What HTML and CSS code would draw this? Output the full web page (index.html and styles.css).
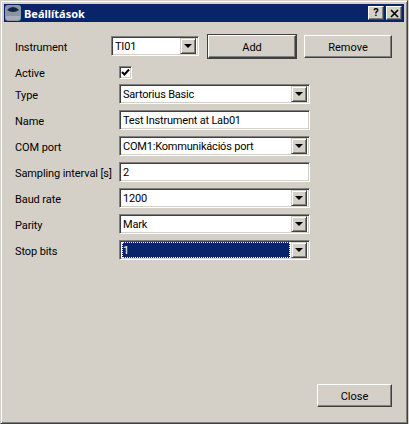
FILE: index.html
```html
<!DOCTYPE html>
<html lang="en">
<head>
    <meta charset="UTF-8">
    <title>Beállítások</title>
    <link rel="stylesheet" href="styles.css">
</head>
<body>

    <div class="window">
        <div class="titlebar">
            <svg class="app-icon" xmlns="http://www.w3.org/2000/svg" viewBox="0 0 16 16">
                <rect x="0" y="0" width="16" height="16" rx="3" fill="#8d93a3"></rect>
                <path d="M2 5 Q8 -1 14 5 Q8 9 2 5 Z" fill="#0f2440"></path>
                <path d="M1 11 H15 V13 Q15 15 13 15 H3 Q1 15 1 13 Z" fill="#a9adb8"></path>
            </svg>
            <span class="title">Beállítások</span>
            <div class="caption-btn">
                <span class="help">?</span>
            </div>
            <div class="caption-btn close-x">
                <svg xmlns="http://www.w3.org/2000/svg" viewBox="0 0 9 9" width="9" height="9">
                    <path d="M1 1 L8 8 M8 1 L1 8" stroke="#000" stroke-width="1.6" fill="none"></path>
                </svg>
            </div>
        </div>

        <div class="content">
            <div class="top-row">
                <label class="top-label">Instrument</label>
                <div class="combo combo-small">
                    <span class="combo-text">TI01</span>
                    <span class="combo-btn"><i class="arrow"></i></span>
                </div>
                <button class="btn btn-default">Add</button>
                <button class="btn btn-remove">Remove</button>
            </div>

            <div class="row row-check">
                <label>Active</label>
                <span class="checkbox">
                    <svg xmlns="http://www.w3.org/2000/svg" viewBox="0 0 9 9" width="9" height="9">
                        <path d="M1 4 L3.5 6.5 L8 1.5" stroke="#000" stroke-width="2" fill="none"></path>
                    </svg>
                </span>
            </div>

            <div class="row">
                <label>Type</label>
                <div class="combo">
                    <span class="combo-text">Sartorius Basic</span>
                    <span class="combo-btn"><i class="arrow"></i></span>
                </div>
            </div>
            <div class="row">
                <label>Name</label>
                <input class="field" type="text" value="Test Instrument at Lab01">
            </div>
            <div class="row">
                <label>COM port</label>
                <div class="combo">
                    <span class="combo-text">COM1:Kommunikációs port</span>
                    <span class="combo-btn"><i class="arrow"></i></span>
                </div>
            </div>
            <div class="row">
                <label>Sampling interval [s]</label>
                <input class="field" type="text" value="2">
            </div>
            <div class="row">
                <label>Baud rate</label>
                <div class="combo">
                    <span class="combo-text">1200</span>
                    <span class="combo-btn"><i class="arrow"></i></span>
                </div>
            </div>
            <div class="row">
                <label>Parity</label>
                <div class="combo">
                    <span class="combo-text">Mark</span>
                    <span class="combo-btn"><i class="arrow"></i></span>
                </div>
            </div>
            <div class="row">
                <label>Stop bits</label>
                <div class="combo combo-focus">
                    <span class="combo-text">1</span>
                    <span class="combo-btn"><i class="arrow"></i></span>
                </div>
            </div>

            <div class="footer">
                <button class="btn btn-close">Close</button>
            </div>
        </div>
    </div>

</body>
</html>
```

FILE: styles.css
```css
* {
    margin: 0;
    padding: 0;
    box-sizing: border-box;
    font-family: Roboto, "Liberation Sans", sans-serif;
}

body {
    background-color: #d4d0c8;
    width: 409px;
    height: 424px;
    overflow: hidden;
}

.window {
    width: 408px;
    height: 424px;
    padding: 4px;
    background: #d4d0c8;
    border: 1px solid;
    border-color: #d4d0c8 #404040 #404040 #d4d0c8;
    box-shadow: inset 1px 1px 0 #fff, inset -1px -1px 0 #808080;
    display: flex;
    flex-direction: column;
    font-size: 11px;
    color: #000;
}

.titlebar {
    height: 18px;
    margin: -1px -1px 0;
    background: #0a246a;
    display: flex;
    align-items: center;
    padding-right: 2px;
    gap: 2px;
}

.app-icon {
    width: 16px;
    height: 16px;
    margin-left: 1px;
}

.title {
    flex: 1;
    margin-left: 1px;
    color: #fff;
    font-family: "Noto Sans", sans-serif;
    font-size: 11px;
    font-weight: bold;
}

.caption-btn {
    width: 16px;
    height: 14px;
    background: #d4d0c8;
    border: 1px solid;
    border-color: #fff #404040 #404040 #fff;
    box-shadow: inset -1px -1px 0 #808080;
    display: flex;
    align-items: center;
    justify-content: center;
}

.help {
    font-size: 11px;
    font-weight: bold;
    line-height: 12px;
}

.content {
    flex: 1;
    display: flex;
    flex-direction: column;
    padding: 11px 11px 12px 10px;
}

.top-row {
    display: flex;
    align-items: center;
    height: 26px;
    margin-bottom: 6px;
}

.top-label {
    width: 96px;
    padding-top: 2px;
    letter-spacing: -0.1px;
}

.row {
    display: flex;
    align-items: center;
    height: 20px;
    margin-bottom: 6px;
}

.row label {
    width: 104px;
    flex-shrink: 0;
    white-space: nowrap;
    padding-top: 2px;
    letter-spacing: -0.1px;
}

.row-check {
    height: 14px;
    margin-bottom: 5px;
}

.combo, .field {
    width: 191px;
    height: 20px;
    background: #fff;
    border: 1px solid;
    border-color: #808080 #fff #fff #808080;
    box-shadow: inset 1px 1px 0 #404040, inset -1px -1px 0 #d4d0c8;
    font-size: 11px;
    letter-spacing: -0.2px;
    color: #000;
}

.combo {
    display: flex;
    align-items: center;
    padding: 2px;
}

.combo-text {
    flex: 1;
    padding-left: 1px;
    padding-top: 1px;
    height: 16px;
    line-height: 16px;
    white-space: nowrap;
    overflow: hidden;
}

.combo-btn {
    width: 16px;
    height: 16px;
    flex-shrink: 0;
    background: #d4d0c8;
    border: 1px solid;
    border-color: #d4d0c8 #404040 #404040 #d4d0c8;
    box-shadow: inset 1px 1px 0 #fff, inset -1px -1px 0 #808080;
    display: flex;
    align-items: center;
    justify-content: center;
}

.arrow {
    width: 0;
    height: 0;
    border-left: 4px solid transparent;
    border-right: 4px solid transparent;
    border-top: 4px solid #000;
}

.combo-small {
    width: 88px;
}

.field {
    padding: 1px 3px 0;
    outline: none;
}

.combo-focus .combo-text {
    background: #0a246a;
    color: #fff;
    margin-right: 1px;
    outline: 1px dotted #fff;
    outline-offset: -1px;
}

.checkbox {
    width: 13px;
    height: 13px;
    background: #fff;
    border: 1px solid;
    border-color: #808080 #fff #fff #808080;
    box-shadow: inset 1px 1px 0 #404040, inset -1px -1px 0 #d4d0c8;
    display: flex;
    align-items: center;
    justify-content: center;
}

.btn {
    background: #d4d0c8;
    border: 1px solid;
    border-color: #fff #404040 #404040 #fff;
    box-shadow: inset -1px -1px 0 #808080;
    font-size: 11px;
    color: #000;
    padding-top: 2px;
}

.btn-default {
    width: 88px;
    height: 23px;
    margin-left: 9px;
    outline: 1px solid #404040;
    outline-offset: 0;
}

.btn-remove {
    width: 88px;
    height: 23px;
    margin-left: 8px;
}

.footer {
    margin-top: auto;
    display: flex;
    justify-content: flex-end;
}

.btn-close {
    width: 75px;
    height: 23px;
}
```
